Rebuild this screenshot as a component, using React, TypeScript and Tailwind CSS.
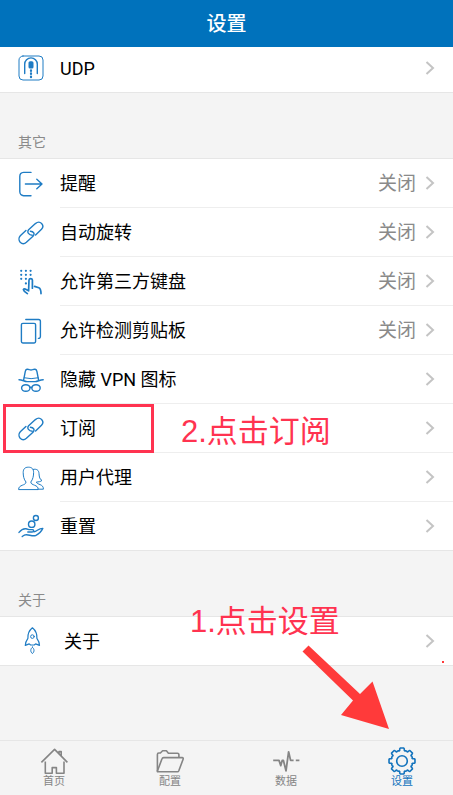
import type { ReactNode } from "react";

interface RowItem {
    id: string;
    label: string;
    icon: ReactNode;
    value?: string;
    marked?: boolean;
}

interface TabItem {
    id: string;
    label: string;
    icon: ReactNode;
    active?: boolean;
}

const Icon = ({ children, className = "size-[26px]", box = 26 }: { children: ReactNode, className?: string, box?: number }) => (
    <svg
        viewBox={`0 0 ${box} ${box}`}
        className={`${className} shrink-0`}
        fill="none"
        stroke="currentColor"
        strokeWidth="1.4"
        strokeLinecap="round"
        strokeLinejoin="round"
        aria-hidden="true"
    >
        {children}
    </svg>
);

const TabIcon = ({ children }: { children: ReactNode }) => (
    <svg
        viewBox="0 0 28 28"
        className="size-7"
        fill="none"
        stroke="currentColor"
        strokeWidth="1.6"
        strokeLinejoin="round"
        aria-hidden="true"
    >
        {children}
    </svg>
);

const LinkIcon = () => (
    <Icon>
        <path d="M14.3 15.2C11 15.2 8.6 12.2 10.6 9.8L17.4 3.6C19.4 1.9 21.8 1.7 23.6 3.4C25.3 5.2 25.2 7.4 23.5 9.2L17.6 14.9" />
        <path d="M7.9 10.4L2.3 15.8C.6 17.6 .6 20.4 2.2 22.2C4 24 6.4 24 8.4 22.3L15 16.2C17.2 13.9 15.6 11.4 12.4 11.2" />
    </Icon>
);

// garis luar roda gigi, 8 gigi
const gearPoints = Array.from({ length: 8 }, (_, i) => i * 45)
    .flatMap((deg) => [[-19, 10.9], [-15, 10.4], [-12, 11], [-10.5, 12.4], [-8, 13.1], [8, 13.1], [10.5, 12.4], [12, 11], [15, 10.4], [19, 10.9]].map(([d, r]) => {
        const a = ((deg + d) * Math.PI) / 180;
        return `${(14 + r * Math.sin(a)).toFixed(2)},${(14 - r * Math.cos(a)).toFixed(2)}`;
    }))
    .join(" ");

const networkRows: RowItem[] = [
    {
        id: "udp",
        label: "UDP",
        icon: (
            <Icon>
                <rect x="1" y="1" width="24" height="24" rx="4" strokeWidth="1" />
                <path d="M6.7 18.5V9.2A6.2 6.2 0 0 1 19.3 9.2V18.5" />
                <rect x="10.5" y="6.2" width="5" height="7.4" rx="1.6" fill="currentColor" stroke="none" />
                <path d="M13 15.3V16M13 18.4V19M13 21.6V22.2" strokeWidth="2.2" />
            </Icon>
        ),
    },
];

const otherRows: RowItem[] = [
    {
        id: "remind",
        label: "提醒",
        value: "关闭",
        icon: (
            <Icon>
                <path d="M13 1.4H5.6A4 4 0 0 0 1.8 5.4V20.6A4 4 0 0 0 5.6 24.7H13" />
                <path d="M7.4 13H24M18.8 8.2L24 13L18.8 17.8" />
            </Icon>
        ),
    },
    { id: "rotate", label: "自动旋转", value: "关闭", icon: <LinkIcon /> },
    {
        id: "keyboard",
        label: "允许第三方键盘",
        value: "关闭",
        icon: (
            <Icon>
                <path d="M3.2 1.8h.01M7.9 1.8h.01M12.6 1.8h.01M3.2 5.8h.01M7.9 5.8h.01M12.6 5.8h.01M3.2 9.8h.01M7.9 9.8h.01M7.9 14.4h.01" strokeWidth="2.2" />
                <path d="M9.4 24.6L6.4 22.4L5.4 20.6C5.8 19.6 7 19.6 8.2 20.6L10.6 21.8L11 11C11.2 9.2 14.2 9.2 14.4 11V19.2M16.6 17.4L20.8 18.8C22.6 19.6 23 21 23 24.6" strokeWidth="1.7" />
            </Icon>
        ),
    },
    {
        id: "clipboard",
        label: "允许检测剪贴板",
        value: "关闭",
        icon: (
            <Icon>
                <rect x="3.4" y="5.4" width="14.2" height="19.6" rx="1.4" />
                <path d="M7.8 1.5H20.6A1.8 1.8 0 0 1 22.4 3.3V18.6A1.8 1.8 0 0 1 20.4 20.4" />
            </Icon>
        ),
    },
    {
        id: "vpn",
        label: "隐藏 VPN 图标",
        icon: (
            <Icon>
                <path d="M5.6 13.2L7.3 4.3C7.8 1.6 10 2.1 11.4 2.7Q13 3.3 14.6 2.7C16 2.1 18.4 1.6 18.9 4.3L20.6 13.2" />
                <path d="M6.2 10.8Q13 12.6 20.2 10.8" strokeWidth="1" />
                <path d="M1 12.7C4.4 12.7 6.4 14.6 9 14.6H17.2C19.8 14.6 21.8 12.7 25.2 12.7" />
                <ellipse cx="7.8" cy="21" rx="4.2" ry="3.3" />
                <ellipse cx="18" cy="21" rx="4.2" ry="3.3" />
                <path d="M12 20.6Q12.9 19.8 13.8 20.6" />
            </Icon>
        ),
    },
    { id: "subscribe", label: "订阅", icon: <LinkIcon />, marked: true },
    {
        id: "agent",
        label: "用户代理",
        icon: (
            <Icon>
                <path strokeWidth="1" d="M.6 24.2C.4 19.4 8 20.8 8 17C5.8 14.4 5.2 10.8 5.2 7.6C5.2 3.8 7 2.2 10.4 2.2C13.8 2.2 15.6 3.8 15.6 7.6C15.6 10.8 15 14.4 12.8 17C12.8 20.8 20.6 19.4 20.2 24.2Z" />
                <path strokeWidth="1" d="M15.2 4.4C18.6 3.6 20.8 5 21 8.6C21.2 12 21.8 14.6 24 15.4C22.8 16.6 20.4 17 18.4 17C18.8 20 25.6 18.6 25.4 24.2H20.2" />
            </Icon>
        ),
    },
    {
        id: "reset",
        label: "重置",
        icon: (
            <Icon>
                <circle cx="17.9" cy="5" r="2.5" />
                <circle cx="13.7" cy="11.2" r="3.2" />
                <path d="M1 19.4C3.4 16.6 5.6 15.4 8 15.8L11 16.6H14.4C16.2 16.8 16 18.8 14.2 19L9.8 19" />
                <path d="M16 18.8C19 18.4 20.6 15.2 24.8 15.4C23.6 18 20.4 21.2 17.6 22.6C14 23.4 10.4 21.4 7.8 21.8C6 22 5.4 22.8 4.2 23.6" />
            </Icon>
        ),
    },
];

const aboutRows: RowItem[] = [
    {
        id: "about",
        label: "关于",
        icon: (
            <Icon className="size-7 mr-0.5" box={28}>
                <path strokeWidth="1.2" d="M14.4 .8C11.2 3.4 9.6 6.6 9.9 11.4C8.6 13.2 7.4 15.4 7.3 18.4L11.2 16.9L12.6 18H16.2L17.6 16.9L21.5 18.4C21.4 15.4 20.2 13.2 18.9 11.4C19.2 6.6 17.6 3.4 14.4 .8Z" />
                <circle cx="14.4" cy="9.6" r="1.8" strokeWidth="1" />
                <path d="M14.4 20.2C12.2 22 12.2 24.6 14.4 26.6C16.6 24.6 16.6 22 14.4 20.2Z" strokeWidth="1" />
            </Icon>
        ),
    },
];

const tabs: TabItem[] = [
    {
        id: "home",
        label: "首页",
        icon: (
            <TabIcon>
                <path d="M1.4 15.4L14.6 2.4L27.4 15.4M19 6.4V4.6H21.2V9" />
                <path d="M5.3 14.6V26.3H12.2V20.6H16.4V26.3H24V14.6" />
            </TabIcon>
        ),
    },
    {
        id: "config",
        label: "配置",
        icon: (
            <TabIcon>
                <path d="M1.4 24.2V7.4Q1.4 6 2.8 6H4.4L6.6 3.8H10.4L12.4 6.2H21.4Q22.9 6.2 22.9 7.6V10.4" />
                <path d="M1.8 24.8H21.4Q22.4 24.8 22.8 23.8L27.2 12Q27.4 10.6 26.2 10.6H7.6Q6.4 10.6 6 11.8L1.4 24Q1.2 24.8 1.8 24.8Z" />
            </TabIcon>
        ),
    },
    {
        id: "data",
        label: "数据",
        icon: (
            <TabIcon>
                <path strokeWidth="1.8" d="M1.2 13.4H7L8.8 18.6L10.2 13.4H11.4L14 23.8L16.6 4.8L18.6 13.4H21.6M23.8 13.4H27.4" />
            </TabIcon>
        ),
    },
    {
        id: "settings",
        label: "设置",
        active: true,
        icon: (
            <TabIcon>
                <polygon points={gearPoints} />
                <circle cx="14" cy="14" r="5.3" />
            </TabIcon>
        ),
    },
];

const Chevron = () => (
    <svg viewBox="0 0 10 16" className="w-[10px] h-4 shrink-0 text-[#c4c4c4]" fill="none" stroke="currentColor" strokeWidth="2" aria-hidden="true">
        <path d="M1.5 2L8 8L1.5 14" />
    </svg>
);

const List = ({ rows }: { rows: RowItem[] }) => (
    <ul className="bg-white border-b border-[#e6e6e6]">
        {rows.map((row, index) => (
            <li key={row.id} className="relative">
                <button type="button" className="flex w-full items-center pl-[18px] text-left text-[#1f7cc4]">
                    {row.icon}
                    <span className={`ml-4 flex flex-1 items-center pr-[18px] ${index < rows.length - 1 ? "h-[49px] border-b border-[#eeeeee]" : "h-12"}`}>
                        <span className="flex-1 pt-0.5 text-lg text-black">{row.label}</span>
                        {row.value && <span className="mr-[9px] pt-0.5 text-[19px] text-[#8a8a8a]">{row.value}</span>}
                        <Chevron />
                    </span>
                </button>
                {row.marked &&
                    <>
                        <div className="absolute left-[3px] top-0 h-[49px] w-[151px] border-3 border-[#ff3350]" />
                        <p className="absolute left-[181px] top-1.5 font-['Liberation_Sans','Noto_Sans_CJK_SC',sans-serif] text-[31px] leading-[44px] whitespace-nowrap text-[#ff3350]">2.点击订阅</p>
                    </>
                }
            </li>
        ))}
    </ul>
);

const SectionTitle = ({ children }: { children: ReactNode }) => (
    <h2 className="flex h-[66px] items-end border-b border-[#e6e6e6] px-[18px] pb-1.5 text-sm text-[#8a8a8a]">{children}</h2>
);

const App = () => {
    return (
        <div className="flex min-h-screen flex-col bg-[#f4f4f4] font-[Roboto,'Noto_Sans_CJK_SC',sans-serif]">
            <header className="relative z-10 flex h-[47px] items-center justify-center bg-[#0072bc]">
                <h1 className="text-xl font-medium text-white">设置</h1>
            </header>
            <main className="-mt-[3px] flex-1">
                <List rows={networkRows} />
                <section>
                    <SectionTitle>其它</SectionTitle>
                    <List rows={otherRows} />
                </section>
                <section className="relative">
                    <SectionTitle>关于</SectionTitle>
                    <List rows={aboutRows} />
                    <p className="absolute left-[190px] top-[49px] font-['Liberation_Sans','Noto_Sans_CJK_SC',sans-serif] text-[31px] leading-[44px] whitespace-nowrap text-[#ff3350]">1.点击设置</p>
                    <svg viewBox="0 0 88 84" className="absolute right-[63px] top-[94px] h-[84px] w-[88px] text-[#ff3a3a]" fill="currentColor" aria-hidden="true">
                        <polygon points="0.5,6.5 6.5,0.5 58,49 70.5,36.5 87,84 39,70 51,55.5" />
                    </svg>
                    <span className="absolute right-[9px] top-[110px] size-0.5 bg-[#ff3a3a]" />
                </section>
            </main>
            <nav className="flex h-[55px] justify-between border-t border-[#e6e6e6] pl-10 pr-[37px] pt-1.5">
                {tabs.map((tab) => (
                    <a
                        key={tab.id}
                        href={`#${tab.id}`}
                        className={`flex w-7 flex-col items-center ${tab.active ? "text-[#1273bd]" : "text-[#858585]"}`}
                    >
                        {tab.icon}
                        <span className="text-[11px] leading-[14px] whitespace-nowrap">{tab.label}</span>
                    </a>
                ))}
            </nav>
        </div>
    );
};

export default App;
